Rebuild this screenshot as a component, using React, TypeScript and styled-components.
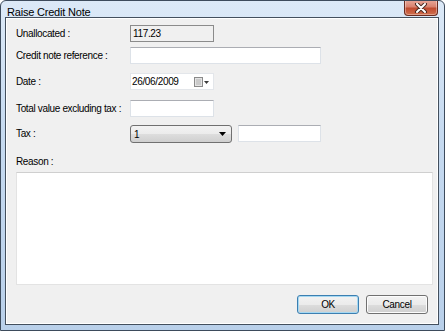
import styled, { createGlobalStyle } from 'styled-components';

const GlobalStyle = createGlobalStyle`
  html, body {
    margin: 0;
    padding: 0;
    background: #ffffff;
    overflow: hidden;
  }
  * {
    box-sizing: border-box;
  }
`;

interface FieldRowProps {
  $gap: number;
}

export default function App() {
  return (
    <>
      <GlobalStyle />
      <Window>
        <TitleBar>
          <Title>Raise Credit Note</Title>
          <CloseButton>
            <svg width="14" height="10" viewBox="0 0 14 10">
              <path d="M3 1 L11 9 M11 1 L3 9" stroke="#4a2a22" strokeWidth="4" strokeLinecap="round" />
              <path d="M3 1 L11 9 M11 1 L3 9" stroke="#ffffff" strokeWidth="2" strokeLinecap="round" />
            </svg>
          </CloseButton>
        </TitleBar>
        <Client>
          <Form>
            <FieldRow $gap={0}>
              <Label>Unallocated :</Label>
              <ReadOnlyBox>117.23</ReadOnlyBox>
            </FieldRow>
            <FieldRow $gap={5}>
              <Label>Credit note reference :</Label>
              <TextBox $width={191} />
            </FieldRow>
            <FieldRow $gap={9}>
              <Label>Date :</Label>
              <DateBox>
                <span>26/06/2009</span>
                <DateButton>
                  <svg width="16" height="10" viewBox="0 0 16 10">
                    <rect x="0.5" y="0.5" width="8" height="9" fill="#e4e4e4" stroke="#8a8a8a" />
                    <path d="M2 3 H7 M2 5 H7 M2 7 H7" stroke="#b0b0b0" />
                    <path d="M10 4 L15 4 L12.5 7 Z" fill="#3a3a3a" />
                  </svg>
                </DateButton>
              </DateBox>
            </FieldRow>
            <FieldRow $gap={10}>
              <Label>Total value excluding tax :</Label>
              <TextBox $width={84} />
            </FieldRow>
            <FieldRow $gap={8}>
              <Label>Tax :</Label>
              <TaxControls>
                <ComboBox>
                  <span>1</span>
                  <svg width="7" height="4" viewBox="0 0 7 4">
                    <path d="M0 0 L7 0 L3.5 4 Z" fill="#000000" />
                  </svg>
                </ComboBox>
                <TextBox $width={83} />
              </TaxControls>
            </FieldRow>
            <ReasonLabel>Reason :</ReasonLabel>
            <ReasonBox />
          </Form>
          <ButtonBar>
            <DialogButton $isDefault>OK</DialogButton>
            <DialogButton>Cancel</DialogButton>
          </ButtonBar>
        </Client>
      </Window>
    </>
  );
}

const Window = styled.div`
  display: flex;
  flex-direction: column;
  width: 445px;
  height: 331px;
  border: 1px solid #3d4b5c;
  border-radius: 6px 6px 0 0;
  background: linear-gradient(180deg, #dce9f7 0%, #c6daf0 40%, #b9d0ea 100%);
  font-family: 'Liberation Sans', Arial, sans-serif;
  font-size: 10px;
  letter-spacing: -0.35px;
  color: #000000;
  overflow: hidden;
`;

const TitleBar = styled.div`
  display: flex;
  align-items: flex-start;
  justify-content: space-between;
  height: 21px;
  padding: 0 6px 0 6px;
`;

const Title = styled.span`
  padding-top: 5px;
  font-size: 11px;
  letter-spacing: -0.2px;
  color: #000000;
`;

const CloseButton = styled.div`
  display: flex;
  align-items: center;
  justify-content: center;
  width: 34px;
  height: 16px;
  margin-top: -1px;
  border: 1px solid #6a2b20;
  border-top: none;
  border-radius: 0 0 4px 4px;
  background: linear-gradient(180deg, #e9a99b 0%, #d9826f 45%, #c04b30 55%, #d0704f 100%);
  box-shadow: inset 0 0 0 1px rgba(255, 255, 255, 0.35);
`;

const Client = styled.div`
  display: flex;
  flex-direction: column;
  flex: 1;
  width: 432px;
  margin: 0 0 7px 5px;
  border: 1px solid #ffffff;
  outline: 1px solid #434f5d;
  background: #f0f0f0;
  padding: 6px 4px 9px 9px;
`;

const Form = styled.div`
  display: flex;
  flex-direction: column;
`;

const FieldRow = styled.div<FieldRowProps>`
  display: grid;
  grid-template-columns: 114px auto;
  align-items: center;
  margin-top: ${({ $gap }) => $gap}px;
`;

const Label = styled.span`
  line-height: 14px;
  white-space: nowrap;
`;

const ReadOnlyBox = styled.div`
  width: 84px;
  height: 17px;
  border: 1px solid #8b8b8b;
  background: #f0f0f0;
  padding: 1px 2px;
  line-height: 13px;
`;

const TextBox = styled.div<{ $width: number }>`
  width: ${({ $width }) => $width}px;
  height: 17px;
  border: 1px solid #dde2e8;
  border-top-color: #abadb3;
  background: #ffffff;
`;

const DateBox = styled.div`
  display: flex;
  align-items: center;
  justify-content: space-between;
  width: 84px;
  height: 17px;
  border: 1px solid #e3e6ea;
  background: #ffffff;
  padding: 0 3px 0 1px;
`;

const DateButton = styled.span`
  display: flex;
  align-items: center;
`;

const TaxControls = styled.div`
  display: flex;
  align-items: flex-start;
  gap: 6px;
`;

const ComboBox = styled.div`
  display: flex;
  align-items: center;
  justify-content: space-between;
  width: 102px;
  height: 18px;
  border: 1px solid #707070;
  border-radius: 3px;
  background: linear-gradient(180deg, #f3f3f3 0%, #ebebeb 50%, #dddddd 51%, #cfcfcf 100%);
  padding: 0 5px 0 3px;
`;

const ReasonLabel = styled.span`
  margin-top: 12px;
  line-height: 14px;
`;

const ReasonBox = styled.div`
  height: 113px;
  margin-top: 3px;
  border: 1px solid #e3e3e3;
  border-top-color: #cfcfcf;
  background: #ffffff;
`;

const ButtonBar = styled.div`
  display: flex;
  justify-content: flex-end;
  gap: 7px;
  margin-top: 10px;
  padding-right: 5px;
`;

const DialogButton = styled.div<{ $isDefault?: boolean }>`
  display: flex;
  align-items: center;
  justify-content: center;
  width: 62px;
  height: 19px;
  border: 1px solid ${({ $isDefault }) => ($isDefault ? '#3c7fb1' : '#707070')};
  border-radius: 3px;
  background: linear-gradient(180deg, #f2f2f2 0%, #ebebeb 50%, #dddddd 51%, #cfcfcf 100%);
  box-shadow: ${({ $isDefault }) => ($isDefault ? 'inset 0 0 0 1px #a5d8f2' : 'inset 0 0 0 1px #fcfcfc')};
`;
